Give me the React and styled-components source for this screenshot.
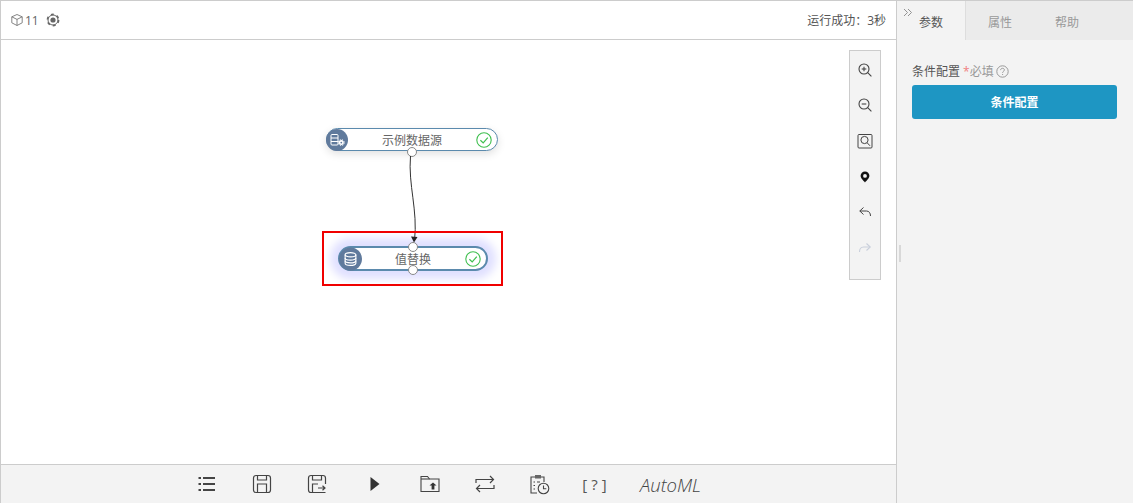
import styled, { createGlobalStyle } from "styled-components";

const GlobalStyle = createGlobalStyle`
  html, body {
    margin: 0;
    padding: 0;
    background: #fff;
  }
  body {
    font-family: "Open Sans", "Noto Sans CJK SC", sans-serif;
    font-size: 12px;
    color: #666;
  }
`;

const Page = styled.div`
  display: flex;
  width: 1133px;
  height: 503px;
  overflow: hidden;
  box-sizing: border-box;
  border-top: 1px solid #ccc;
`;

const Main = styled.div`
  display: flex;
  flex-direction: column;
  width: 897px;
  box-sizing: border-box;
  border-left: 1px solid #ccc;
  border-right: 1px solid #ccc;
`;

const TopBar = styled.div`
  display: flex;
  align-items: center;
  justify-content: space-between;
  height: 38px;
  padding: 0 10px 0 9px;
  border-bottom: 1px solid #ccc;
  flex-shrink: 0;
`;

const TopLeft = styled.div`
  display: flex;
  align-items: center;
  color: #666;
  font-size: 12px;
  gap: 1px;
`;

const GearWrap = styled.span`
  display: flex;
  margin-left: 6px;
`;

const Status = styled.div`
  font-size: 12px;
  color: #555;
`;

const Canvas = styled.div`
  position: relative;
  flex: 1;
`;

const EdgeLayer = styled.svg`
  position: absolute;
  left: 0;
  top: 0;
  width: 895px;
  height: 424px;
  pointer-events: none;
  z-index: 3;
`;

const Node = styled.div`
  position: absolute;
  left: ${(p) => p.$x}px;
  top: ${(p) => p.$y}px;
  width: ${(p) => p.$w}px;
  height: ${(p) => p.$h}px;
  box-sizing: border-box;
  display: flex;
  align-items: center;
  justify-content: center;
  background: #fff;
  border-radius: 13px;
  border: ${(p) => (p.$selected ? "2px solid #5b8aad" : "1px solid #5b8aad")};
  box-shadow: ${(p) =>
    p.$selected
      ? "0 0 9px 8px #e0e0ff"
      : "0 3px 9px rgba(0, 0, 0, 0.12)"};
`;

const NodeBadge = styled.span`
  position: absolute;
  left: -1px;
  top: 50%;
  transform: translateY(-50%);
  width: ${(p) => p.$size}px;
  height: ${(p) => p.$size}px;
  border-radius: 50%;
  background: #607a9c;
  display: flex;
  align-items: center;
  justify-content: center;
`;

const NodeLabel = styled.span`
  font-size: 12px;
  color: #666;
`;

const NodeCheck = styled.span`
  position: absolute;
  right: ${(p) => p.$right}px;
  top: 50%;
  transform: translateY(-50%);
  display: flex;
`;

const Port = styled.span`
  position: absolute;
  left: ${(p) => p.$x}px;
  top: ${(p) => p.$y}px;
  width: 10px;
  height: 10px;
  box-sizing: border-box;
  border-radius: 50%;
  background: #fff;
  border: 1px solid #888;
  z-index: 2;
`;

const Selection = styled.div`
  position: absolute;
  left: 321px;
  top: 191px;
  width: 181px;
  height: 55px;
  box-sizing: border-box;
  border: 2px solid #f00000;
  z-index: 4;
`;

const ZoomBar = styled.div`
  position: absolute;
  left: 848px;
  top: 10px;
  width: 32px;
  height: 230px;
  box-sizing: border-box;
  border: 1px solid #ccc;
  background: #f3f3f3;
  display: flex;
  flex-direction: column;
  align-items: center;
  padding-top: 1px;
`;

const ZoomButton = styled.span`
  height: 35.6px;
  display: flex;
  align-items: center;
  justify-content: center;
  color: ${(p) => (p.$disabled ? "#c9cfdb" : "#444")};
`;

const BottomBar = styled.div`
  height: 38px;
  flex-shrink: 0;
  background: #f3f3f3;
  border-top: 1px solid #ccc;
  display: flex;
  align-items: center;
  padding-left: 178px;
  color: #444;
`;

const BottomItem = styled.span`
  width: 55px;
  margin-left: ${(p) => p.$gap || 0}px;
  display: flex;
  justify-content: center;
  align-items: center;
`;

const Hint = styled.span`
  font-size: 15px;
  letter-spacing: 4px;
  color: #555;
  white-space: nowrap;
`;

const AutoMl = styled.span`
  margin-left: 16px;
  font-style: italic;
  font-size: 18.5px;
  font-weight: 300;
  color: #444;
`;

const Side = styled.div`
  position: relative;
  flex: 1;
  background: #f3f3f3;
`;

const Collapse = styled.span`
  position: absolute;
  left: 6px;
  top: 7px;
  display: flex;
  color: #888;
`;

const Splitter = styled.span`
  position: absolute;
  left: 2px;
  top: 244px;
  width: 2px;
  height: 17px;
  background: #d8d8d8;
`;

const Tabs = styled.div`
  display: flex;
  height: 39px;
  background: #ebebeb;
`;

const Tab = styled.span`
  width: ${(p) => p.$w}px;
  box-sizing: border-box;
  display: flex;
  justify-content: center;
  padding-top: 12px;
  font-size: 12px;
  color: ${(p) => (p.$active ? "#555" : "#999")};
  background: ${(p) => (p.$active ? "#f3f3f3" : "transparent")};
  border-right: ${(p) => (p.$active ? "1px solid #ddd" : "none")};
`;

const SideBody = styled.div`
  padding: 22px 16px 0 15px;
`;

const FieldLabel = styled.div`
  display: flex;
  align-items: center;
  height: 18px;
  font-size: 12px;
  color: #555;
`;

const Required = styled.span`
  color: #999;
  margin-left: 3px;
  & b {
    color: #f08080;
    font-weight: 400;
  }
`;

const HelpWrap = styled.span`
  display: flex;
  margin-left: 2px;
  color: #999;
`;

const PrimaryButton = styled.button`
  display: block;
  width: 205px;
  height: 34px;
  margin-top: 5px;
  border: none;
  border-radius: 3px;
  background: #1e96c3;
  color: #fff;
  font-family: inherit;
  font-size: 12px;
  font-weight: 700;
`;

const Icon = ({ size = 20, children, stroke = "currentColor", width = 1.3 }) => (
  <svg
    width={size}
    height={size}
    viewBox={`0 0 ${size} ${size}`}
    fill="none"
    stroke={stroke}
    strokeWidth={width}
  >
    {children}
  </svg>
);

const Check = ({ size }) => (
  <svg width={size} height={size} viewBox="0 0 16 16" fill="none" stroke="#3fbf4f" strokeWidth="1.1">
    <circle cx="8" cy="8" r="7.2" />
    <path d="M4.4 8.2 L7.2 10.9 L11.8 5.6" strokeWidth="1.2" />
  </svg>
);

const Db = () => (
  <svg width="15" height="15" viewBox="0 0 14 14" fill="none" stroke="#fff" strokeWidth="1.1">
    <ellipse cx="7" cy="3" rx="5" ry="2" />
    <path d="M2 3 V11 C2 12.2 4.2 13 7 13 S12 12.2 12 11 V3" />
    <path d="M2 6 C2 7.2 4.2 8 7 8 S12 7.2 12 6" />
    <path d="M2 8.7 C2 9.9 4.2 10.6 7 10.6 S12 9.9 12 8.7" />
  </svg>
);

const DbGear = () => (
  <svg width="15" height="14" viewBox="0 0 15 14" fill="none" stroke="#fff" strokeWidth="1">
    <rect x="1" y="1.5" width="7" height="10.5" rx="1" />
    <path d="M1 5 H8 M1 8.5 H8" />
    <circle cx="11.3" cy="9.6" r="1.7" strokeWidth="1.6" />
    <circle cx="11.3" cy="9.6" r="3" strokeWidth="0.9" strokeDasharray="1.2 1.2" />
  </svg>
);

const ZoomGlass = ({ sign }) => (
  <Icon size={14} width={1.1}>
    <circle cx="6" cy="6" r="5" />
    <path d="M9.7 9.7 L13.4 13.4" />
    <path d="M3.7 6 H8.3" />
    {sign === "plus" && <path d="M6 3.7 V8.3" />}
  </Icon>
);

const App = () => (
  <>
    <GlobalStyle />
    <Page>
      <Main>
        <TopBar>
          <TopLeft>
            <svg width="14" height="14" viewBox="0 0 14 14" fill="none" stroke="#777" strokeWidth="0.9">
              <path d="M7 1.5 L12.2 3.8 V9.8 L7 12.5 L1.8 9.8 V3.8 Z" />
              <path d="M1.8 3.8 L7 6.4 L12.2 3.8 M7 6.4 V12.5" />
            </svg>
            <span>11</span>
            <GearWrap>
              <svg width="14" height="14" viewBox="0 0 14 14" fill="none" stroke="#666">
                <circle cx="7" cy="7" r="5" strokeWidth="1" />
                <circle cx="7" cy="7" r="5.6" strokeWidth="1.6" strokeDasharray="2.9 3" />
                <circle cx="7" cy="7" r="2.6" fill="#666" stroke="none" />
              </svg>
            </GearWrap>
          </TopLeft>
          <Status>运行成功：3秒</Status>
        </TopBar>
        <Canvas>
          <Node $x={325} $y={88} $w={172} $h={23}>
            <NodeBadge $size={22}>
              <DbGear />
            </NodeBadge>
            <NodeLabel>示例数据源</NodeLabel>
            <NodeCheck $right={5}>
              <Check size={16} />
            </NodeCheck>
            <Port $x={80} $y={18} />
          </Node>
          <Node $x={337} $y={206} $w={150} $h={25} $selected>
            <NodeBadge $size={23}>
              <Db />
            </NodeBadge>
            <NodeLabel>值替换</NodeLabel>
            <NodeCheck $right={5}>
              <Check size={16} />
            </NodeCheck>
            <Port $x={68} $y={-6} />
            <Port $x={68} $y={17} />
          </Node>
          <EdgeLayer viewBox="0 0 895 424">
            <path d="M409.5 116 C407 145 417 170 413.5 201" fill="none" stroke="#333" strokeWidth="1" />
            <path d="M410 196.5 L416.5 197 L413 202.5 Z" fill="#222" />
          </EdgeLayer>
          <Selection />
          <ZoomBar>
            <ZoomButton>
              <ZoomGlass sign="plus" />
            </ZoomButton>
            <ZoomButton>
              <ZoomGlass sign="minus" />
            </ZoomButton>
            <ZoomButton>
              <Icon size={16} width={1}>
                <rect x="1" y="1.5" width="14" height="13.5" rx="1" />
                <circle cx="7.5" cy="7" r="3.6" />
                <path d="M10.2 9.8 L13 12.8" />
              </Icon>
            </ZoomButton>
            <ZoomButton>
              <svg width="12" height="14" viewBox="0 0 12 14">
                <path
                  fillRule="evenodd"
                  d="M6 12.5 C5 11 1.6 8.6 1.6 5.8 A4.4 4.4 0 0 1 10.4 5.8 C10.4 8.6 7 11 6 12.5 Z M6 4 A1.9 1.9 0 1 0 6 7.8 A1.9 1.9 0 1 0 6 4 Z"
                  fill="#111"
                />
              </svg>
            </ZoomButton>
            <ZoomButton>
              <Icon size={14} width={1}>
                <path d="M5.5 2.5 L1.8 6 L5.5 9.5" />
                <path d="M1.8 6 H8.5 C11 6 12.5 8 12.5 11" />
              </Icon>
            </ZoomButton>
            <ZoomButton $disabled>
              <Icon size={14} width={1.1}>
                <path d="M8.5 2.5 L12.2 6 L8.5 9.5" />
                <path d="M12.2 6 H5.5 C3 6 1.5 8 1.5 11" />
              </Icon>
            </ZoomButton>
          </ZoomBar>
        </Canvas>
        <BottomBar>
          <BottomItem>
            <svg width="18" height="16" viewBox="0 0 18 16" stroke="#444" strokeWidth="2">
              <path d="M0.5 2 H3 M5 2 H17 M0.5 8 H3 M5 8 H17 M0.5 14 H3 M5 14 H17" />
            </svg>
          </BottomItem>
          <BottomItem>
            <Icon size={20} width={1.2}>
              <rect x="1.5" y="1.5" width="17" height="17" rx="2.5" />
              <path d="M5.5 1.5 V6 H14.5 V1.5" />
              <path d="M5.5 18.5 V10 H14.5 V18.5" />
            </Icon>
          </BottomItem>
          <BottomItem>
            <Icon size={20} width={1.2}>
              <path d="M18.5 10 V4 C18.5 2.5 17.5 1.5 16 1.5 H4 C2.5 1.5 1.5 2.5 1.5 4 V16 C1.5 17.5 2.5 18.5 4 18.5 H18.5" />
              <path d="M5.5 1.5 V6 H14.5 V1.5" />
              <path d="M5.5 18.5 V10 H11" />
              <path d="M11 14 H18 M15.5 11.7 L18 14 L15.5 16.3" />
            </Icon>
          </BottomItem>
          <BottomItem $gap={3}>
            <svg width="12" height="16" viewBox="0 0 12 16">
              <path d="M1.5 1 L10.5 8 L1.5 15 Z" fill="#333" />
            </svg>
          </BottomItem>
          <BottomItem>
            <svg width="20" height="18" viewBox="0 0 20 18" fill="none" stroke="#444" strokeWidth="1.1">
              <path d="M19 16.5 H1 V1.5 H7.5 L9.5 4 H19 Z" />
              <path d="M1 4 H9.5" />
              <path d="M9.5 10.5 L13 7.5 L16.5 10.5 Z" fill="#333" stroke="none" />
              <path d="M11.6 10 H14.4 V14.5 H11.6 Z" fill="#333" stroke="none" />
            </svg>
          </BottomItem>
          <BottomItem>
            <svg width="20" height="18" viewBox="0 0 20 18" fill="none" stroke="#444" strokeWidth="1.2">
              <path d="M1 8 V4.5 H18.5 M15 1 L18.5 4.5 L15 8" />
              <path d="M19 10 V13.5 H1.5 M5 10 L1.5 13.5 L5 17" />
            </svg>
          </BottomItem>
          <BottomItem>
            <svg width="21" height="21" viewBox="0 0 21 21" fill="none" stroke="#444" strokeWidth="1.1">
              <path d="M6 3 H2 V19 H8" />
              <path d="M12 3 H15 V8" />
              <rect x="6" y="1" width="6" height="3.5" fill="#666" stroke="none" />
              <path d="M4.5 8 H6 M8 8 H11 M4.5 11.5 H6 M4.5 15 H6" />
              <circle cx="14.5" cy="14.5" r="5.3" />
              <path d="M14.5 11.5 V14.8 H17.3" />
            </svg>
          </BottomItem>
          <BottomItem $gap={2}>
            <Hint>[?]</Hint>
          </BottomItem>
          <AutoMl>AutoML</AutoMl>
        </BottomBar>
      </Main>
      <Side>
        <Collapse>
          <svg width="10" height="10" viewBox="0 0 10 10" fill="none" stroke="currentColor" strokeWidth="0.9">
            <path d="M1 1 L4.5 4.5 L1 8 M5 1 L8.5 4.5 L5 8" />
          </svg>
        </Collapse>
        <Splitter />
        <Tabs>
          <Tab $w={69} $active>参数</Tab>
          <Tab $w={68}>属性</Tab>
          <Tab $w={66}>帮助</Tab>
        </Tabs>
        <SideBody>
          <FieldLabel>
            条件配置
            <Required>
              <b>*</b>必填
            </Required>
            <HelpWrap>
              <svg width="13" height="13" viewBox="0 0 13 13" fill="none" stroke="currentColor" strokeWidth="1">
                <circle cx="6.5" cy="6.5" r="5.7" />
                <path d="M4.6 5.1 C4.6 3.9 5.5 3.3 6.5 3.3 C7.6 3.3 8.4 4 8.4 5 C8.4 6.2 6.6 6.3 6.6 7.8" />
                <path d="M6.6 9 V10" />
              </svg>
            </HelpWrap>
          </FieldLabel>
          <PrimaryButton>条件配置</PrimaryButton>
        </SideBody>
      </Side>
    </Page>
  </>
);

export default App;
